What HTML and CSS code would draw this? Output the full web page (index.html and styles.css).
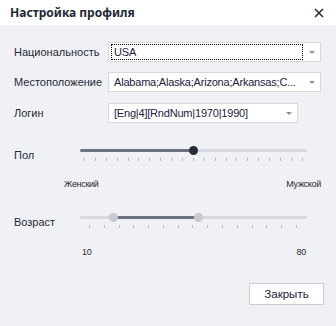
FILE: index.html
```html
<!DOCTYPE html>
<html>
<head>
    <title>Настройка профиля</title>
    <link rel="stylesheet" href="styles.css">
</head>
<body>
    <div class="dialog">
        <div class="header">
            <span class="title">Настройка профиля</span>
            <span class="close">
                <svg width="10" height="10" viewBox="0 0 10 10">
                    <path d="M1 1 L9 9 M9 1 L1 9" stroke="#2b3340" stroke-width="1.7" fill="none"/>
                </svg>
            </span>
        </div>
        <div class="content">
            <div class="field">
                <label>Национальность</label>
                <div class="select wide">
                    <span class="value focused">USA</span>
                    <span class="arrow"></span>
                </div>
            </div>
            <div class="field">
                <label>Местоположение</label>
                <div class="select wide">
                    <span class="value">Alabama;Alaska;Arizona;Arkansas;C...</span>
                    <span class="arrow"></span>
                </div>
            </div>
            <div class="field login">
                <label>Логин</label>
                <div class="select narrow">
                    <span class="value">[Eng|4][RndNum|1970|1990]</span>
                    <span class="arrow"></span>
                </div>
            </div>

            <div class="slider-row gender">
                <span class="slider-label">Пол</span>
                <div class="slider">
                    <div class="track">
                        <div class="fill" style="left:0; width:113px"></div>
                        <div class="thumb dark" style="left:113px"></div>
                    </div>
                    <div class="ticks">
                        <i></i><i></i><i></i><i></i><i></i><i></i><i></i>
                        <i></i><i></i><i></i><i></i><i></i><i></i><i></i>
                        <i></i><i></i><i></i><i></i><i></i><i></i><i></i>
                    </div>
                </div>
            </div>
            <div class="scale gender-scale">
                <span>Женский</span>
                <span>Мужской</span>
            </div>

            <div class="slider-row age">
                <span class="slider-label">Возраст</span>
                <div class="slider">
                    <div class="track">
                        <div class="fill" style="left:33px; width:85px"></div>
                        <div class="thumb light" style="left:33px"></div>
                        <div class="thumb light" style="left:118px"></div>
                    </div>
                    <div class="ticks age-ticks">
                        <i></i><i></i><i></i><i></i><i></i><i></i><i></i><i></i>
                        <i></i><i></i><i></i><i></i><i></i><i></i><i></i>
                    </div>
                </div>
            </div>
            <div class="scale age-scale">
                <span>10</span>
                <span>80</span>
            </div>

            <div class="footer">
                <button>Закрыть</button>
            </div>
        </div>
    </div>
</body>
</html>
```

FILE: styles.css
```css
body {
    margin: 0;
    font-family: "Liberation Sans", Arial, sans-serif;
    font-size: 11px;
    color: #1f2937;
    background: #f0f1f5;
}
.dialog {
    width: 336px;
    height: 326px;
    background: #f0f1f5;
}
.header {
    height: 25px;
    background: #ffffff;
    display: flex;
    align-items: center;
    justify-content: space-between;
    padding: 0 12px 0 10px;
}
.title {
    font-family: "Noto Sans", sans-serif;
    font-weight: bold;
    font-size: 12px;
    color: #1f2937;
}
.close {
    display: flex;
    margin-top: 1px;
}
.content {
    padding: 17px 0 0 14px;
}
.field {
    display: flex;
    align-items: center;
    height: 20px;
    margin-bottom: 10px;
}
.field.login {
    margin-top: 11px;
}
.field label {
    width: 94px;
}
.select {
    height: 20px;
    box-sizing: border-box;
    background: #ffffff;
    border: 1px solid #d5d8de;
    display: flex;
    align-items: center;
    padding: 0 0 0 2px;
    color: #1c2140;
    font-size: 11px;
    letter-spacing: -0.2px;
}
.select.wide {
    width: 213px;
}
.select.narrow {
    width: 190px;
}
.value {
    flex: 1;
    height: 16px;
    line-height: 15px;
    padding-left: 2px;
    box-sizing: border-box;
    white-space: nowrap;
    border: 1px solid transparent;
}
.value.focused {
    border: 1px dotted #000000;
}
.arrow {
    width: 17px;
    display: flex;
    justify-content: center;
}
.arrow::before {
    content: "";
    border-left: 3px solid transparent;
    border-right: 3px solid transparent;
    border-top: 3px solid #8a8f99;
}
.slider-row {
    display: flex;
    align-items: center;
}
.slider-row.gender {
    margin-top: 26px;
}
.slider-row.age {
    margin-top: 27px;
}
.slider-label {
    width: 66px;
}
.slider {
    width: 227px;
}
.track {
    position: relative;
    height: 3px;
    border-radius: 2px;
    background: #d6d9e0;
}
.fill {
    position: absolute;
    top: 0;
    height: 3px;
    border-radius: 2px;
    background: #6b7384;
}
.thumb {
    position: absolute;
    top: -3px;
    width: 9px;
    height: 9px;
    margin-left: -4px;
    border-radius: 50%;
}
.thumb.dark {
    background: #222c3a;
}
.thumb.light {
    background: #c8cad0;
}
.ticks {
    display: flex;
    justify-content: space-between;
    margin-top: 6px;
    padding: 0 4px;
}
.ticks.age-ticks {
    padding: 0 10px 0 9px;
}
.ticks i {
    width: 1px;
    height: 3px;
    background: #b4b8c0;
}
.scale {
    display: flex;
    justify-content: space-between;
    font-size: 9px;
    letter-spacing: -0.3px;
    color: #1f2937;
}
.gender-scale {
    margin: 18px 0 0 50px;
    width: 257px;
}
.age-scale {
    margin: 19px 0 0 68px;
    width: 224px;
}
.footer {
    display: flex;
    justify-content: flex-end;
    margin-top: 26px;
    padding-right: 12px;
}
button {
    width: 75px;
    height: 22px;
    background: #ffffff;
    border: 1px solid #c8ccd4;
    font-family: "Liberation Sans", Arial, sans-serif;
    font-size: 11.5px;
    color: #1c2140;
    padding: 0;
}
```
